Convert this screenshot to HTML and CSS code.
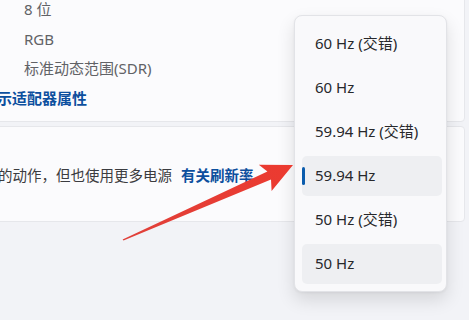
FILE: index.html
```html
<!DOCTYPE html>
<html lang="zh-CN">
<head>
<meta charset="utf-8">
<title>刷新率</title>
<link rel="stylesheet" href="styles.css">
</head>
<body>
<div class="page">
  <section class="card card-top">
    <div class="row muted">8 位</div>
    <div class="row muted">RGB</div>
    <div class="row muted">标准动态范围(SDR)</div>
    <div class="row link shift">显示适配器属性</div>
  </section>
  <section class="card card-mid">
    <span class="desc">的动作，但也使用更多电源</span>
    <span class="link">有关刷新率</span>
  </section>
</div>

<div class="menu">
  <div class="item">60 Hz (交错)</div>
  <div class="item">60 Hz</div>
  <div class="item">59.94 Hz (交错)</div>
  <div class="item selected"><span class="indicator"></span>59.94 Hz</div>
  <div class="item">50 Hz (交错)</div>
  <div class="item hover">50 Hz</div>
</div>

<svg class="arrow" width="469" height="320" viewBox="0 0 469 320" xmlns="http://www.w3.org/2000/svg">
  <defs>
    <linearGradient id="ag" x1="123" y1="240" x2="293" y2="165" gradientUnits="userSpaceOnUse">
      <stop offset="0" stop-color="#e0403a"/>
      <stop offset="1" stop-color="#ec3a30"/>
    </linearGradient>
  </defs>
  <polygon fill="url(#ag)" points="293,165 271.6,191 271,179.4 123.5,240.6 122.6,239.6 267.4,171.6 258.8,164.8"/>
</svg>
</body>
</html>
```

FILE: styles.css
```css
html, body {
  margin: 0;
  padding: 0;
}
body {
  width: 469px;
  height: 320px;
  overflow: hidden;
  background: #f2f3f7;
  font-family: "Noto Sans", "Noto Sans CJK SC", sans-serif;
  position: relative;
}
.page {
  display: flex;
  flex-direction: column;
  gap: 4px;
  width: 490px;
  margin-left: -25px;
  margin-top: -6px;
}
.card {
  background: #fbfbfd;
  border: 1px solid #e6e7eb;
  border-radius: 4px;
  box-sizing: border-box;
}
.card-top {
  padding: 0 0 7px 48px;
  height: 128px;
}
.row {
  line-height: 29.6px;
  font-size: 15px;
  white-space: nowrap;
}
.muted {
  color: #616266;
}
.link {
  color: #0c4f9e;
  font-weight: 600;
}
.shift {
  margin-left: -42px;
}
.card-mid {
  height: 96px;
  display: flex;
  align-items: center;
  gap: 9px;
  padding-left: 22px;
  font-size: 14.5px;
  white-space: nowrap;
}
.desc {
  color: #3b3c40;
}
.menu {
  position: absolute;
  left: 294px;
  top: 15px;
  width: 153px;
  height: 277px;
  box-sizing: border-box;
  background: #f9f9fb;
  border: 1px solid #e2e3e7;
  border-radius: 8px;
  box-shadow: 0 8px 18px rgba(0, 0, 0, 0.12), 0 1px 3px rgba(0, 0, 0, 0.05);
  padding: 8px 4px 7px 7px;
  display: flex;
  flex-direction: column;
  gap: 4px;
}
.item {
  position: relative;
  height: 40px;
  line-height: 39px;
  padding-left: 13px;
  font-size: 15px;
  color: #27282b;
  border-radius: 5px;
  white-space: nowrap;
}
.selected, .hover {
  background: #eeeff2;
}
.indicator {
  position: absolute;
  left: 0;
  top: 11px;
  width: 3px;
  height: 18px;
  border-radius: 2px;
  background: #0b5cad;
}
.arrow {
  position: absolute;
  left: 0;
  top: 0;
  pointer-events: none;
}
```
